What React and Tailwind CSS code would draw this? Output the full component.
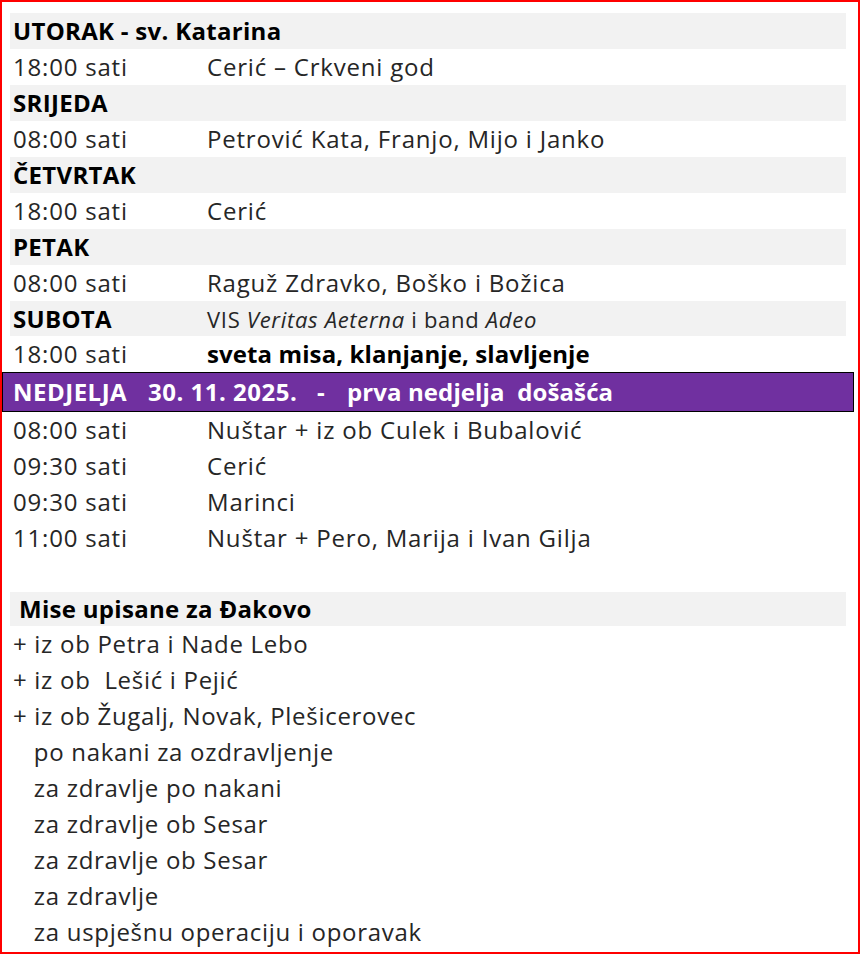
const week = [
  { day: "UTORAK - sv. Katarina", time: "18:00 sati", text: "Cerić – Crkveni god" },
  { day: "SRIJEDA", time: "08:00 sati", text: "Petrović Kata, Franjo, Mijo i Janko" },
  { day: "ČETVRTAK", time: "18:00 sati", text: "Cerić" },
  { day: "PETAK", time: "08:00 sati", text: "Raguž Zdravko, Boško i Božica" },
]

const sunday = [
  { time: "08:00 sati", text: "Nuštar + iz ob Culek i Bubalović" },
  { time: "09:30 sati", text: "Cerić" },
  { time: "09:30 sati", text: "Marinci" },
  { time: "11:00 sati", text: "Nuštar + Pero, Marija i Ivan Gilja" },
]

const djakovo = [
  "+ iz ob Petra i Nade Lebo",
  "+ iz ob  Lešić i Pejić",
  "+ iz ob Žugalj, Novak, Plešicerovec",
  "   po nakani za ozdravljenje",
  "   za zdravlje po nakani",
  "   za zdravlje ob Sesar",
  "   za zdravlje ob Sesar",
  "   za zdravlje",
  "   za uspješnu operaciju i oporavak",
]

const Row = ({ time, children }) => (
  <div className="flex h-[36px] items-center pl-[3px] text-[#262626] tracking-[0.8px]">
    <span className="w-[194px] shrink-0">{time}</span>
    <span>{children}</span>
  </div>
)

const App = () => {
  return (
    <div
      className="w-[860px] h-[954px] border-2 border-[#ff0000] bg-white overflow-hidden text-[24px] leading-none"
      style={{ fontFamily: '"Open Sans", "Noto Sans", sans-serif' }}
    >
      <div className="pt-[11px] pl-[8px] pr-[12px]">
        {week.map(d => (
          <div key={d.day}>
            <div className="flex h-[36px] items-center bg-[#f2f2f2] pl-[3px] font-bold text-black tracking-[0.3px]">
              {d.day}
            </div>
            <Row time={d.time}>{d.text}</Row>
          </div>
        ))}

        {/* subota */}
        <div className="flex h-[35px] items-center bg-[#f2f2f2] pl-[3px]">
          <span className="w-[194px] shrink-0 font-bold text-black tracking-[0.3px]">SUBOTA</span>
          <span className="text-[22px] text-[#262626] tracking-[0.7px]">
            VIS <i>Veritas Aeterna</i> i band <i>Adeo</i>
          </span>
        </div>
        <Row time="18:00 sati">
          <b className="text-black tracking-[0.1px]">sveta misa, klanjanje, slavljenje</b>
        </Row>
      </div>

      {/* nedjelja */}
      <div className="mr-[4px] flex h-[40px] items-center border border-black bg-[#7030a0] pl-[10px] font-bold text-white tracking-[0.5px] whitespace-pre">
        <span className="w-[135px] shrink-0">NEDJELJA</span>
        <span className="w-[169px] shrink-0">30. 11. 2025.</span>
        <span className="w-[30px] shrink-0">-</span>
        <span className="tracking-[0.1px]">{"prva nedjelja  došašća"}</span>
      </div>

      <div className="pl-[8px] pr-[12px]">
        {sunday.map((s, i) => (
          <Row key={i} time={s.time}>{s.text}</Row>
        ))}

        <div className="h-[36px]" />

        <div className="flex h-[34px] items-center bg-[#f2f2f2] pl-[9px] font-bold text-black tracking-[0.3px]">
          Mise upisane za Đakovo
        </div>
        {djakovo.map((m, i) => (
          <div key={i} className="flex h-[36px] items-center pl-[3px] text-[#262626] tracking-[0.7px] whitespace-pre">
            {m}
          </div>
        ))}
      </div>
    </div>
  )
}

export default App
